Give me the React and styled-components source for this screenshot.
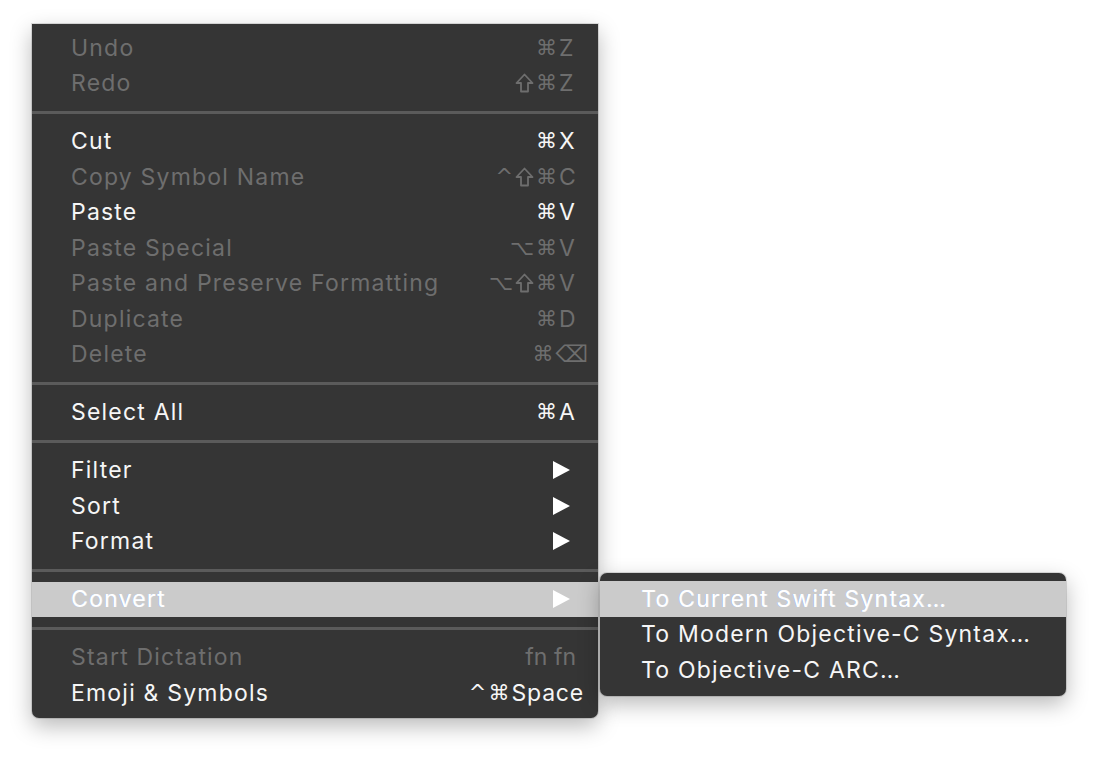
import React from 'react';
import styled, { createGlobalStyle } from 'styled-components';

const GlobalStyle = createGlobalStyle`
  html, body {
    margin: 0;
    padding: 0;
    background: #ffffff;
  }
  body {
    font-family: 'Inter', 'DejaVu Sans', sans-serif;
  }
`;

const Page = styled.div`
  position: relative;
  width: 1098px;
  height: 757px;
  padding: 24px 0 0 32px;
  box-sizing: border-box;
`;

const Menu = styled.div`
  width: 566px;
  box-sizing: border-box;
  padding: 6px 0 7px 0;
  background: #353535;
  border-radius: 0 0 7px 7px;
  box-shadow: 0 0 0 1px rgba(0, 0, 0, 0.12), 0 8px 22px rgba(0, 0, 0, 0.28);
`;

const SubMenu = styled.div`
  position: absolute;
  left: 600px;
  top: 573px;
  width: 466px;
  box-sizing: border-box;
  padding: 8px 0 8px 0;
  background: #353535;
  border-radius: 7px;
  box-shadow: 0 0 0 1px rgba(0, 0, 0, 0.12), 0 8px 22px rgba(0, 0, 0, 0.28);
`;

const Row = styled.div`
  display: flex;
  align-items: center;
  height: 35.5px;
  padding: 0 18px 0 ${p => p.$indent || 39}px;
  font-size: 23px;
  letter-spacing: 1.2px;
  color: ${p => (p.$disabled ? '#6e6e6e' : '#f6f6f6')};
  background: ${p => (p.$active ? '#cbcbcb' : 'transparent')};
  ${p => p.$active && 'text-shadow: -0.6px 0 0 rgba(120, 170, 255, 0.5), 0.6px 0 0 rgba(255, 255, 255, 0.6);'}
  ${p => p.$active && 'color: #ffffff;'}
`;

const Label = styled.span`
  flex: 1;
  white-space: nowrap;
`;

const Shortcut = styled.span`
  display: flex;
  align-items: center;
  white-space: nowrap;
  letter-spacing: 0;
`;

const Mods = styled.span`
  display: flex;
  align-items: center;
  gap: 2px;
  margin-right: 2px;
  font-family: 'DejaVu Sans', sans-serif;
  font-size: 21px;
`;

const Key = styled.span`
  min-width: 21px;
  text-align: left;
  margin-right: ${p => p.$shift || 0}px;
  letter-spacing: ${p => (p.$spaced ? '0.8px' : '0')};
  font-family: ${p => (p.$symbol ? "'DejaVu Sans', sans-serif" : "'Inter', sans-serif")};
`;

const Separator = styled.div`
  height: 3px;
  margin: 9.75px 0;
  background: #5b5b5b;
`;

const Arrow = styled.svg`
  width: 17px;
  height: 18px;
  margin-right: 10px;
`;

const ShiftSvg = styled.svg`
  width: 19px;
  height: 20px;
`;

const SubArrow = () => (
  <Arrow viewBox="0 0 17 18">
    <polygon points="0,0 17,9 0,18" fill="#ffffff" />
  </Arrow>
);

const ShiftIcon = () => (
  <ShiftSvg viewBox="0 0 19 20">
    <path
      d="M9.5 1.5 L17.5 10 L13 10 L13 18.5 L6 18.5 L6 10 L1.5 10 Z"
      fill="none"
      stroke="currentColor"
      strokeWidth="1.8"
      strokeLinejoin="round"
    />
  </ShiftSvg>
);

const Item = ({ label, mods, keyName, disabled, active, submenu, symbol, shift, spaced }) => (
  <Row $disabled={disabled} $active={active}>
    <Label>{label}</Label>
    {submenu ? (
      <SubArrow />
    ) : (
      <Shortcut>
        {mods && (
          <Mods>
            {[...mods].map((m, i) => (m === '⇧' ? <ShiftIcon key={i} /> : <span key={i}>{m}</span>))}
          </Mods>
        )}
        {keyName && (
          <Key $symbol={symbol} $shift={shift} $spaced={spaced}>
            {keyName}
          </Key>
        )}
      </Shortcut>
    )}
  </Row>
);

export default function App() {
  return (
    <>
      <GlobalStyle />
      <Page>
        <Menu>
          <Item label="Undo" mods="⌘" keyName="Z" disabled />
          <Item label="Redo" mods="⇧⌘" keyName="Z" disabled />
          <Separator />
          <Item label="Cut" mods="⌘" keyName="X" />
          <Item label="Copy Symbol Name" mods="^⇧⌘" keyName="C" disabled />
          <Item label="Paste" mods="⌘" keyName="V" />
          <Item label="Paste Special" mods="⌥⌘" keyName="V" disabled />
          <Item label="Paste and Preserve Formatting" mods="⌥⇧⌘" keyName="V" disabled />
          <Item label="Duplicate" mods="⌘" keyName="D" disabled />
          <Item label="Delete" mods="⌘" keyName="⌫" symbol shift={-8} disabled />
          <Separator />
          <Item label="Select All" mods="⌘" keyName="A" />
          <Separator />
          <Item label="Filter" submenu />
          <Item label="Sort" submenu />
          <Item label="Format" submenu />
          <Separator />
          <Item label="Convert" submenu active />
          <Separator />
          <Item label="Start Dictation" keyName="fn fn" shift={4} disabled />
          <Item label="Emoji & Symbols" mods="^⌘" keyName="Space" shift={-4} spaced />
        </Menu>
        <SubMenu>
          <Row $indent={41} $active>
            <Label>To Current Swift Syntax…</Label>
          </Row>
          <Row $indent={41}>
            <Label>To Modern Objective-C Syntax…</Label>
          </Row>
          <Row $indent={41}>
            <Label>To Objective-C ARC…</Label>
          </Row>
        </SubMenu>
      </Page>
    </>
  );
}
